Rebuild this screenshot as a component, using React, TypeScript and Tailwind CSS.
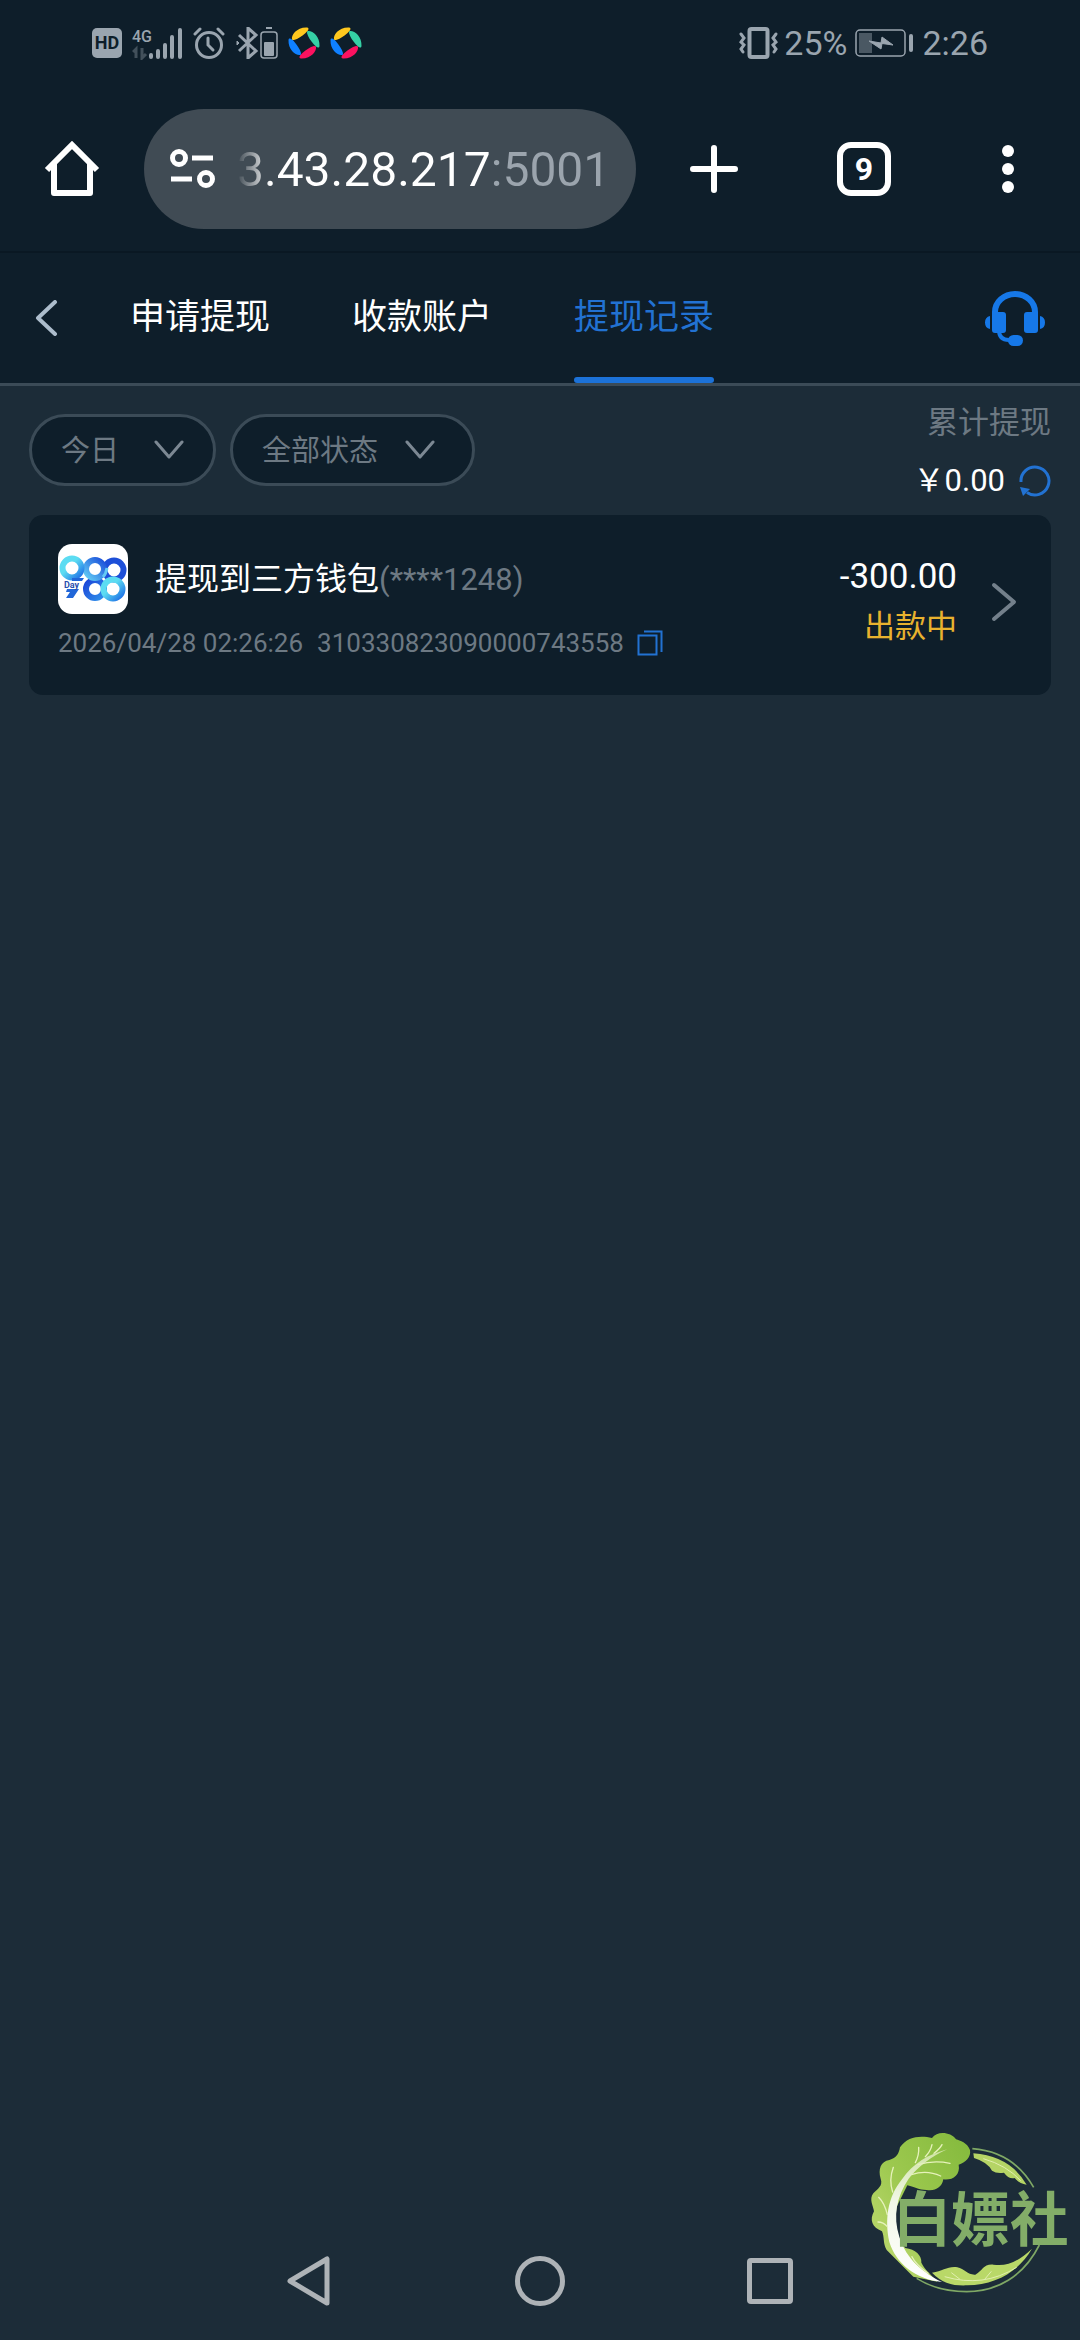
import React from 'react';

const tabs = ['申请提现', '收款账户', '提现记录'];

const records = [
  {
    title: '提现到三方钱包',
    account: '(****1248)',
    time: '2026/04/28 02:26:26',
    orderNo: '310330823090000743558',
    amount: '-300.00',
    status: '出款中',
  },
];

function PinwheelIcon() {
  const petal = 'M4 12.5C3 8 9 0 19 0.5C22 1 20 4 17 6.5C14 9 10 12 6 13Q4 13 4 12.5Z';
  return (
    <svg width="32" height="32" viewBox="0 0 32 32">
      <path d={petal} fill="#ffc81e" />
      <path d={petal} fill="#35d0a5" transform="rotate(90 16 16)" />
      <path d={petal} fill="#fb1260" transform="rotate(180 16 16)" />
      <path d={petal} fill="#0f80ff" transform="rotate(270 16 16)" />
    </svg>
  );
}

function StatusBar() {
  return (
    <div className="flex h-[86px] items-center justify-between px-[92px] text-[#9aa5af]">
      <div className="flex items-center">
        <div className="flex h-[30px] w-[30px] items-center justify-center rounded-[5px] bg-[#9aa5af] text-[18px] font-bold leading-none text-[#0e1e2a]">
          HD
        </div>
        <svg className="ml-[10px]" width="51" height="34" viewBox="0 0 51 34">
          <text x="0" y="16" fontSize="16" fontWeight="500" fill="#9aa5af">4G</text>
          <path d="M4 32V23L1 26M10 22V32L14 28" stroke="#42505b" strokeWidth="3" fill="none" />
          <path d="M19 31V29M26 31V25M33 31V19M40 31V11M48 31V4" stroke="#9aa5af" strokeWidth="4" strokeLinecap="round" />
        </svg>
        <svg className="ml-[10px]" width="32" height="32" viewBox="0 0 32 32" fill="none" stroke="#9aa5af" strokeWidth="3" strokeLinecap="round">
          <circle cx="16" cy="18" r="12.5" />
          <path d="M15 11V18L20 23" />
          <path d="M2 7L7 2M25 2L30 7" />
        </svg>
        <svg className="ml-[11px]" width="42" height="32" viewBox="0 0 42 32" fill="none" stroke="#9aa5af">
          <path d="M3 8L20 24L12 31V1L20 8L3 24" strokeWidth="3" />
          <path d="M1 14V18L3 16Z" fill="#9aa5af" strokeWidth="1" />
          <rect x="25" y="5" width="16" height="26" rx="3" strokeWidth="1.5" />
          <rect x="28" y="15" width="10" height="14" rx="1" fill="#9aa5af" stroke="none" />
          <path d="M30 1H36" strokeWidth="2" />
        </svg>
        <div className="ml-[10px] flex gap-[10px]">
          <PinwheelIcon />
          <PinwheelIcon />
        </div>
      </div>
      <div className="flex items-center text-[34px] leading-none">
        <svg width="40" height="32" viewBox="0 0 40 32" fill="none" stroke="#9aa5af" strokeWidth="3" strokeLinecap="round">
          <rect x="10.5" y="2" width="18" height="28" rx="2" strokeWidth="4" />
          <path d="M2 7L5 11L2 15L5 18L2 22L4 25" />
          <path d="M37 7L34 11L37 15L34 18L37 22L35 25" />
        </svg>
        <span className="ml-[5px]">25%</span>
        <svg className="ml-[8px]" width="58" height="28" viewBox="0 0 58 28">
          <rect x="1" y="1" width="49" height="26" rx="4" fill="none" stroke="#9aa5af" strokeWidth="1.5" />
          <rect x="4" y="4" width="13" height="20" fill="#4a5863" />
          <path d="M14 12L26 14L27 8L38 16L27 14.5L26 20Z" fill="#9aa5af" stroke="#9aa5af" />
          <path d="M56 7V21" stroke="#9aa5af" strokeWidth="4" strokeLinecap="round" />
        </svg>
        <span className="ml-[9px]">2:26</span>
      </div>
    </div>
  );
}

function BrowserBar() {
  return (
    <div className="flex h-[167px] items-center border-b-2 border-[#0a1823] text-white">
      <button aria-label="Home" className="flex h-[120px] w-[144px] items-center justify-center">
        <svg width="56" height="56" viewBox="0 0 56 56" fill="none" stroke="currentColor" strokeWidth="6" strokeLinejoin="round">
          <path d="M3 29L28 4L53 29" strokeLinejoin="miter" />
          <path d="M10 23V52H46V23" />
        </svg>
      </button>
      <div className="flex h-[120px] min-w-0 flex-1 items-center rounded-full bg-[#404b54] pl-[25px] pr-[20px]">
        <svg className="shrink-0" width="48" height="40" viewBox="0 0 48 40" fill="none" stroke="currentColor" strokeWidth="5">
          <circle cx="10" cy="9" r="6.5" />
          <circle cx="37" cy="30" r="6.5" />
          <path d="M23 9H44M2 30H23" />
        </svg>
        <input
          aria-label="Address"
          defaultValue="3.43.28.217:5001"
          className="ml-[20px] min-w-0 flex-1 bg-[linear-gradient(90deg,#404b54_0px,#ffffff_34px,#ffffff_256px,#9ba4ad_256px)] bg-clip-text pt-[2px] text-[48px] text-transparent outline-none"
        />
      </div>
      <button aria-label="New tab" className="flex h-[120px] w-[156px] items-center justify-center">
        <svg width="48" height="48" viewBox="0 0 48 48" stroke="currentColor" strokeWidth="6" strokeLinecap="round">
          <path d="M3 24H45M24 3V45" />
        </svg>
      </button>
      <button aria-label="Tabs" className="flex h-[120px] w-[144px] items-center justify-center">
        <span className="flex h-[54px] w-[54px] items-center justify-center rounded-[14px] border-[6px] border-white text-[32px] font-bold leading-none">
          9
        </span>
      </button>
      <button aria-label="Menu" className="flex h-[120px] w-[144px] items-center justify-center">
        <svg width="12" height="48" viewBox="0 0 12 48" fill="currentColor">
          <circle cx="6" cy="6" r="6" />
          <circle cx="6" cy="24" r="6" />
          <circle cx="6" cy="42" r="6" />
        </svg>
      </button>
    </div>
  );
}

function TabHeader() {
  return (
    <header className="flex h-[133px] items-stretch border-b-[3px] border-[#3b4b57] pr-[34px]">
      <button aria-label="返回" className="flex w-[130px] items-center pl-[35px]">
        <svg width="24" height="36" viewBox="0 0 24 36" fill="none" stroke="#adbdcc" strokeWidth="4" strokeLinecap="round" strokeLinejoin="round">
          <path d="M20 2L3 18L20 34" />
        </svg>
      </button>
      <nav className="flex flex-1 gap-[82px]">
        {tabs.map((tab, i) => (
          <a
            key={tab}
            href="#"
            className={
              i === 2
                ? 'relative flex items-center text-[35px] text-[#2272d2]'
                : 'flex items-center text-[35px] text-white'
            }
          >
            {tab}
            {i === 2 && <span className="absolute inset-x-0 bottom-0 h-[6px] rounded-full bg-[#1c72d8]" />}
          </a>
        ))}
      </nav>
      <button aria-label="客服" className="flex items-center">
        <svg width="62" height="56" viewBox="0 0 62 56" fill="#1678e8">
          <path d="M11 25V22A20 18 0 0 1 51 22V25" fill="none" stroke="#1678e8" strokeWidth="6" />
          <rect x="8" y="22" width="14" height="21" rx="3" />
          <rect x="40" y="22" width="14" height="21" rx="3" />
          <path d="M6 26V39Q1 38 1 32.5T6 26ZM56 26V39Q61 38 61 32.5T56 26Z" />
          <path d="M15 40Q15 50 25 50H30" fill="none" stroke="#1678e8" strokeWidth="4" />
          <rect x="24" y="45" width="15" height="11" rx="5.5" />
        </svg>
      </button>
    </header>
  );
}

function ChevronDown({ className }: { className: string }) {
  return (
    <svg className={className} width="30" height="20" viewBox="0 0 30 20" fill="none" stroke="#7c8893" strokeWidth="3" strokeLinecap="round" strokeLinejoin="round">
      <path d="M2 2L15 17L28 2" />
    </svg>
  );
}

function Filters() {
  return (
    <div className="flex justify-between">
      <div className="flex gap-[14px] pt-[28px]">
        <div className="relative">
          <select
            aria-label="日期"
            className="h-[72px] w-[187px] appearance-none rounded-full border-[3px] border-[#3b4b57] bg-[#0e1e2a] pl-[29px] pt-[3px] text-[29px] text-[#6d7983]"
          >
            <option>今日</option>
          </select>
          <ChevronDown className="pointer-events-none absolute right-[32px] top-[26px]" />
        </div>
        <div className="relative">
          <select
            aria-label="状态"
            className="h-[72px] w-[245px] appearance-none rounded-full border-[3px] border-[#3b4b57] bg-[#0e1e2a] pl-[29px] pt-[3px] text-[29px] text-[#6d7983]"
          >
            <option>全部状态</option>
          </select>
          <ChevronDown className="pointer-events-none absolute right-[40px] top-[26px]" />
        </div>
      </div>
      <div className="flex flex-col items-end pt-[13px]">
        <p className="text-[31px] leading-[48px] text-[#6d7983]">累计提现</p>
        <div className="flex items-center gap-[14px] text-[31px] leading-[68px] text-white">
          ￥0.00
          <button aria-label="刷新">
            <svg width="32" height="32" viewBox="0 0 32 32" fill="none" stroke="#2272d2" strokeWidth="3">
              <path d="M2 17A14 14 0 1 1 8 27.5" />
              <path d="M1 22L11 24L4 31Z" fill="#2272d2" stroke="none" />
            </svg>
          </button>
        </div>
      </div>
    </div>
  );
}

function WalletLogo() {
  return (
    <svg className="rounded-[14px]" width="70" height="70" viewBox="0 0 70 70">
      <defs>
        <linearGradient id="cyan" x1="0" y1="0" x2="1" y2="1">
          <stop offset="0.4" stopColor="#5cdcf2" />
          <stop offset="1" stopColor="#1c6ee6" />
        </linearGradient>
        <linearGradient id="blue" x1="0" y1="1" x2="1" y2="0">
          <stop offset="0" stopColor="#62ccf5" />
          <stop offset="1" stopColor="#1b50da" />
        </linearGradient>
        <linearGradient id="deep" x1="0" y1="0" x2="1" y2="1">
          <stop offset="0" stopColor="#1c44d8" />
          <stop offset="1" stopColor="#2f90ea" />
        </linearGradient>
      </defs>
      <rect width="70" height="70" fill="#fff" />
      <g fill="none" strokeWidth="6">
        <circle cx="37" cy="45" r="9" stroke="url(#deep)" />
        <circle cx="56" cy="26" r="9.5" stroke="#1d4fd8" />
        <circle cx="37" cy="25" r="9" stroke="url(#blue)" />
        <circle cx="55" cy="45" r="9.5" stroke="url(#cyan)" />
        <circle cx="14" cy="24" r="9.5" stroke="url(#cyan)" />
        <path d="M45 33Q48 30 49 24" stroke="#64caf4" strokeWidth="3" />
      </g>
      <path d="M14 34H26L24 37H14ZM9 45H21L15 54H8L12 48H8Z" fill="#2166d8" />
      <text x="6" y="44" fontSize="9" fontWeight="700" fill="#2a4fae">Day</text>
    </svg>
  );
}

function RecordCard({ record }: { record: (typeof records)[number] }) {
  return (
    <article className="flex h-[180px] items-center rounded-[14px] bg-[#0e1e2a] pb-[7px] pl-[29px] pr-[34px]">
      <div className="flex-1">
        <div className="flex items-center">
          <WalletLogo />
          <h2 className="ml-[27px] text-[32px] leading-none text-white">{record.title}</h2>
          <span className="text-[31px] leading-none text-[#6d7983]">{record.account}</span>
        </div>
        <div className="mt-[13px] flex items-center text-[26px] leading-[32px] text-[#6d7983]">
          <time>{record.time}</time>
          <span className="ml-[14px]">{record.orderNo}</span>
          <button aria-label="复制" className="ml-[13px]">
            <svg width="26" height="26" viewBox="0 0 26 26" fill="none" stroke="#2272d2" strokeWidth="2">
              <rect x="1.5" y="5.5" width="18" height="19" />
              <path d="M7 1.5H24.5V22" />
            </svg>
          </button>
        </div>
      </div>
      <div className="flex flex-col items-end">
        <span className="text-[35px] leading-[50px] text-white">{record.amount}</span>
        <span className="text-[31px] leading-[50px] text-[#e8b22e]">{record.status}</span>
      </div>
      <button aria-label="详情" className="ml-[34px]">
        <svg width="26" height="40" viewBox="0 0 26 40" fill="none" stroke="#73808b" strokeWidth="4" strokeLinecap="round" strokeLinejoin="round">
          <path d="M3 3L23 20L3 37" />
        </svg>
      </button>
    </article>
  );
}

function CabbageBadge() {
  return (
    <svg className="pointer-events-none absolute bottom-[30px] right-0" width="230" height="200" viewBox="0 0 690 600">
      <defs>
        <linearGradient id="leaf" x1="1" y1="0" x2="0" y2="1">
          <stop offset="0" stopColor="#83b93c" />
          <stop offset="0.5" stopColor="#9cc84e" />
          <stop offset="1" stopColor="#c6de78" />
        </linearGradient>
        <linearGradient id="stem" x1="0" y1="0" x2="0" y2="1">
          <stop offset="0" stopColor="#cfe3a4" />
          <stop offset="0.4" stopColor="#f2f7e8" />
          <stop offset="1" stopColor="#ffffff" />
        </linearGradient>
      </defs>
      {/* thin ring */}
      <path d="M367 116Q490 125 551 232M568 405C520 500 440 545 350 545C290 545 240 530 200 505" fill="none" stroke="#7fa865" strokeWidth="5" />
      {/* leaf */}
      <path
        d="M360 120C352 98 330 92 318 88C302 66 262 62 246 84C214 76 172 78 150 112C146 132 140 144 118 150C92 154 84 178 92 206C100 228 82 236 70 250C56 268 70 288 72 304C58 330 66 352 96 364C104 382 98 400 110 420L190 500L262 515C236 486 224 478 214 458C216 436 196 418 166 414C140 390 132 340 140 290L172 226C196 232 206 240 230 240C256 244 276 232 280 208C306 212 332 196 326 164C346 158 364 142 360 120Z"
        fill="url(#leaf)"
      />
      <path d="M292 118C232 134 190 160 156 208C112 262 104 330 118 396C138 460 196 508 276 516C200 478 164 432 148 380C128 318 140 260 176 206C208 166 244 140 292 118Z" fill="url(#stem)" />
      <path
        d="M196 158Q208 134 206 112M226 140Q242 124 246 104M252 130Q270 116 276 104M204 164Q250 150 300 160M184 194Q230 178 272 198M128 246Q116 210 130 172M112 314Q104 280 86 262M112 350Q100 336 84 336M234 490Q196 462 186 440"
        fill="none"
        stroke="#e6f2bb"
        strokeWidth="4"
        strokeLinecap="round"
      />
      <path d="M370 130Q480 138 530 224Q508 220 494 204Q476 208 462 188Q440 192 426 182Q412 156 372 144Z" fill="#b5d465" />
      <path d="M400 146Q470 166 512 212" fill="none" stroke="#e2efb0" strokeWidth="3" />
      <path d="M246 488C280 484 292 468 322 472C344 476 354 496 376 494C400 482 398 462 430 464C470 470 504 456 546 416C504 488 434 524 352 526C310 528 276 520 246 488Z" fill="#b9d868" />
      <path d="M284 500Q400 534 500 472M330 508L304 488M404 508L424 484" fill="none" stroke="#e2efb0" strokeWidth="3" />
      <text x="128" y="392" fontSize="176" fontWeight="700" fill="#83ad68">白嫖社</text>
    </svg>
  );
}

function SystemNav() {
  return (
    <div className="flex h-[118px] items-center justify-center text-[#aeb3b7]">
      <button aria-label="Back" className="flex w-[230px] justify-center">
        <svg width="46" height="52" viewBox="0 0 46 52" fill="none" stroke="currentColor" strokeWidth="5" strokeLinejoin="round">
          <path d="M3 26L40 4V48Z" />
        </svg>
      </button>
      <button aria-label="Home screen" className="flex w-[230px] justify-center">
        <svg width="50" height="50" viewBox="0 0 50 50" fill="none" stroke="currentColor" strokeWidth="5">
          <circle cx="25" cy="25" r="22.5" />
        </svg>
      </button>
      <button aria-label="Recent apps" className="flex w-[230px] justify-center">
        <span className="h-[46px] w-[46px] rounded-[4px] border-[5px] border-[#aeb3b7]" />
      </button>
    </div>
  );
}

export default function App() {
  return (
    <div className="relative flex min-h-screen flex-col bg-[#1c2c38] font-['Roboto','Noto_Sans_CJK_SC',sans-serif]">
      <div className="bg-[#0e1e2a]">
        <StatusBar />
        <BrowserBar />
        <TabHeader />
      </div>
      <main className="flex-1 px-[29px]">
        <Filters />
        {records.map((record) => (
          <RecordCard key={record.orderNo} record={record} />
        ))}
      </main>
      <SystemNav />
      <CabbageBadge />
    </div>
  );
}
